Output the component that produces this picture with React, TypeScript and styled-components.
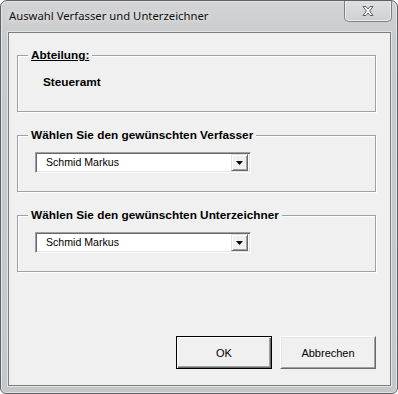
import React from "react";
import styled, { createGlobalStyle } from "styled-components";

const GlobalStyle = createGlobalStyle`
  html, body {
    margin: 0;
    padding: 0;
    background: #ffffff;
  }
  * {
    box-sizing: border-box;
  }
`;

const uiFont = `"Liberation Sans", Arial, sans-serif`;

export default function App() {
  return (
    <>
      <GlobalStyle />
      <Window>
        <TitleBar>
          <Title>Auswahl Verfasser und Unterzeichner</Title>
          <CloseButton aria-label="Schließen">
            <svg width="14" height="12" viewBox="0 0 14 12">
              <path
                d="M2 1.5 L5 1.5 L7 4 L9 1.5 L12 1.5 L8.6 6 L12 10.5 L9 10.5 L7 8 L5 10.5 L2 10.5 L5.4 6 Z"
                fill="#ffffff"
                stroke="#5b6066"
                strokeWidth="1"
                strokeLinejoin="round"
              />
            </svg>
          </CloseButton>
        </TitleBar>

        <Client>
          <Group>
            <Legend $underline>Abteilung:</Legend>
            <GroupBody $pt={14} $pl={25}>
              <Department>Steueramt</Department>
            </GroupBody>
          </Group>

          <Group>
            <Legend>Wählen Sie den gewünschten Verfasser</Legend>
            <GroupBody $pt={10} $pl={17}>
              <ComboBox value="Schmid Markus" />
            </GroupBody>
          </Group>

          <Group>
            <Legend>Wählen Sie den gewünschten Unterzeichner</Legend>
            <GroupBody $pt={10} $pl={17}>
              <ComboBox value="Schmid Markus" />
            </GroupBody>
          </Group>

          <Footer>
            <DialogButton $default>OK</DialogButton>
            <DialogButton>Abbrechen</DialogButton>
          </Footer>
        </Client>
      </Window>
    </>
  );
}

function ComboBox({ value }: { value: string }) {
  return (
    <Combo>
      <ComboText>{value}</ComboText>
      <ComboArrow>
        <svg width="7" height="4" viewBox="0 0 7 4">
          <path d="M0 0 H7 L3.5 4 Z" fill="#000" />
        </svg>
      </ComboArrow>
    </Combo>
  );
}

const Window = styled.div`
  width: 398px;
  height: 394px;
  display: flex;
  flex-direction: column;
  border: 1px solid #5e6166;
  border-radius: 7px 7px 6px 6px;
  background: linear-gradient(to bottom, #d3d4d6 0px, #c9cacc 40px, #c6c7c9 100%);
  box-shadow: inset 0 0 0 1px #e4e5e7;
  overflow: hidden;
`;

const TitleBar = styled.div`
  height: 31px;
  flex: none;
  display: flex;
  align-items: flex-start;
  padding-left: 8px;
  padding-right: 5px;
`;

const Title = styled.div`
  margin-top: 7px;
  font-family: "Noto Sans", "Open Sans", sans-serif;
  font-size: 11.3px;
  line-height: 16px;
  color: #111;
  text-shadow: 0 0 6px rgba(255, 255, 255, 0.9);
  white-space: nowrap;
`;

const CloseButton = styled.div`
  margin-left: auto;
  margin-top: -1px;
  width: 48px;
  height: 22px;
  display: flex;
  align-items: center;
  justify-content: center;
  border: 1px solid #7d8084;
  border-top: none;
  border-radius: 0 0 5px 5px;
  background: linear-gradient(to bottom, #dfe0e2, #cfd0d3);
  box-shadow: inset 0 0 0 1px #eceded;
`;

const Client = styled.div`
  flex: 1;
  margin: 0 6px 7px 7px;
  display: flex;
  flex-direction: column;
  border: 1px solid #7b7e82;
  background: #f0f0f0;
  box-shadow: 0 0 0 1px #e2e3e5;
  padding: 0 14px 16px 8px;
`;

const Group = styled.fieldset`
  margin: 16px 0 0 0;
  padding: 0;
  min-width: 0;
  border: 1px solid #a0a0a0;
  box-shadow: 1px 1px 0 #ffffff, inset 1px 1px 0 #ffffff;
  & + & {
    margin-top: 17px;
  }
`;

const Legend = styled.legend<{ $underline?: boolean }>`
  margin-left: 10px;
  padding: 0 3px;
  background: #f0f0f0;
  font-family: ${uiFont};
  font-size: 11.8px;
  font-weight: bold;
  line-height: 13px;
  color: #000;
  text-decoration: ${(p) => (p.$underline ? "underline" : "none")};
`;

const GroupBody = styled.div<{ $pt: number; $pl: number }>`
  height: 49px;
  padding-top: ${(p) => p.$pt}px;
  padding-left: ${(p) => p.$pl}px;
`;

const Department = styled.div`
  font-family: ${uiFont};
  font-size: 11.8px;
  font-weight: bold;
  line-height: 13px;
  color: #000;
`;

const Combo = styled.div`
  width: 216px;
  height: 21px;
  display: flex;
  align-items: center;
  background: #ffffff;
  border-style: solid;
  border-width: 1px;
  border-color: #a0a0a0 #ffffff #ffffff #a0a0a0;
  box-shadow: inset 1px 1px 0 #696969, inset -1px -1px 0 #e3e3e3;
  padding: 2px 2px 2px 10px;
`;

const ComboText = styled.div`
  flex: 1;
  font-family: ${uiFont};
  font-size: 10.6px;
  line-height: 13px;
  color: #000;
`;

const ComboArrow = styled.div`
  width: 17px;
  height: 17px;
  display: flex;
  align-items: center;
  justify-content: center;
  background: #f0f0f0;
  border-style: solid;
  border-width: 1px;
  border-color: #e3e3e3 #696969 #696969 #e3e3e3;
  box-shadow: inset 1px 1px 0 #ffffff, inset -1px -1px 0 #a0a0a0;
`;

const Footer = styled.div`
  margin-top: auto;
  display: flex;
  justify-content: flex-end;
  gap: 8px;
`;

const DialogButton = styled.div<{ $default?: boolean }>`
  width: 96px;
  height: 33px;
  display: flex;
  align-items: center;
  justify-content: center;
  font-family: ${uiFont};
  font-size: 11px;
  color: #000;
  background: #f0f0f0;
  border: 1px solid;
  border-color: ${(p) =>
    p.$default ? "#000000" : "#ffffff #696969 #696969 #ffffff"};
  box-shadow: ${(p) =>
    p.$default
      ? "inset 1px 1px 0 #ffffff, inset -1px -1px 0 #696969, inset -2px -2px 0 #a0a0a0"
      : "inset 1px 1px 0 #e3e3e3, inset -1px -1px 0 #a0a0a0"};
`;
